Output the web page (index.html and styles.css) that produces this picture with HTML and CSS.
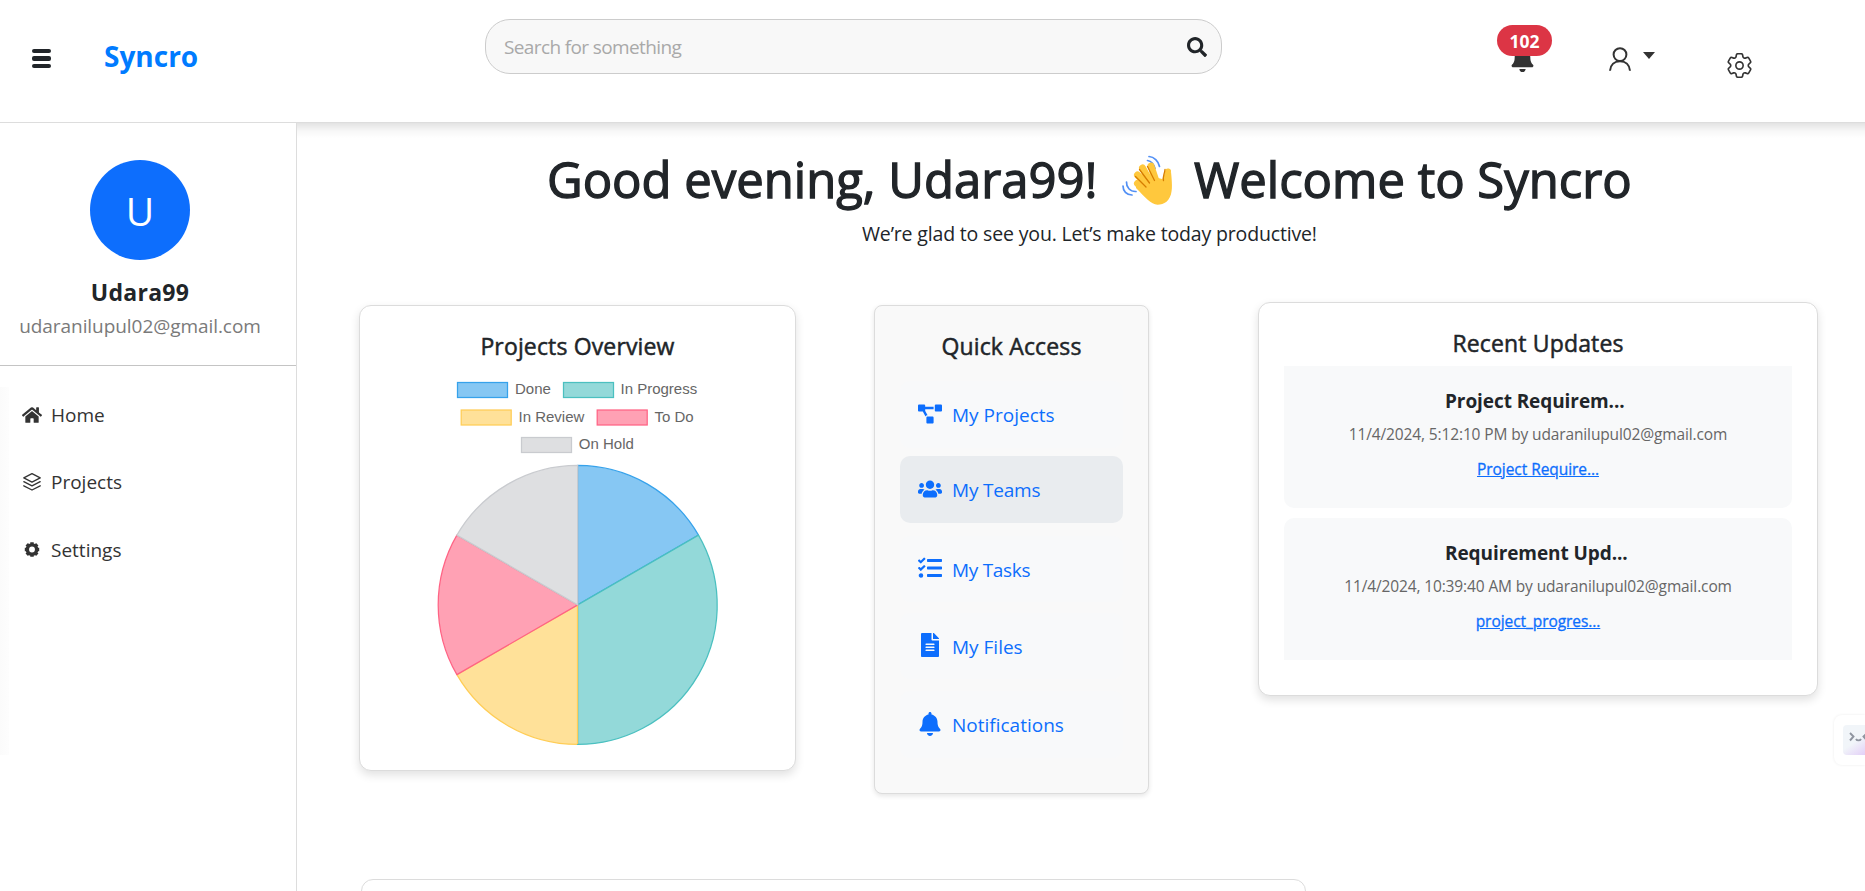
FILE: index.html
```html
<!DOCTYPE html>
<html lang="en">
<head>
<meta charset="utf-8">
<title>Syncro</title>
<link rel="stylesheet" href="styles.css">
</head>
<body>
<header class="topbar">
  <button class="burger" aria-label="Menu"><span></span><span></span><span></span></button>
  <a class="brand"><span class="t">Syncro</span></a>
  <div class="search">
    <span class="t placeholder">Search for something</span>
    <svg class="search-icon" viewBox="0 0 512 512"><path fill="#212529" d="M505 442.700 405.300 343c-4.500-4.500-10.600-7-17-7H372c27.600-35.300 44-79.700 44-128C416 93.100 322.900 0 208 0S0 93.100 0 208s93.100 208 208 208c48.300 0 92.700-16.400 128-44v16.300c0 6.400 2.500 12.500 7 17l99.700 99.700c9.400 9.400 24.600 9.400 33.900 0l28.300-28.300c9.400-9.400 9.400-24.600.1-34zM208 336c-70.700 0-128-57.200-128-128 0-70.700 57.200-128 128-128 70.700 0 128 57.200 128 128 0 70.700-57.200 128-128 128z"/></svg>
  </div>
  <div class="bell">
    <svg viewBox="0 0 448 512"><path fill="#333" d="M224 512c35.320 0 63.970-28.650 63.970-64H160.030c0 35.350 28.650 64 63.970 64zm215.390-149.710c-19.320-20.760-55.470-51.990-55.470-154.290 0-77.700-54.480-139.900-127.940-155.160V32c0-17.670-14.320-32-31.980-32s-31.980 14.330-31.980 32v20.840C118.560 68.100 64.080 130.300 64.080 208c0 102.300-36.150 133.530-55.470 154.290-6 6.450-8.660 14.160-8.610 21.710.11 16.400 12.980 32 32.100 32h383.800c19.120 0 32-15.600 32.100-32 .05-7.550-2.610-15.270-8.610-21.710z"/></svg>
    <span class="badge"><span class="t">102</span></span>
  </div>
  <div class="account">
    <svg class="person" viewBox="0 0 22 24" fill="none" stroke="#333" stroke-width="2"><circle cx="11" cy="7.600" r="6.400"/><path d="M1 23.800c.4-6 4.500-9.600 10-9.600s9.600 3.600 10 9.600"/></svg>
    <span class="caret"></span>
  </div>
  <svg class="gear" viewBox="2.400 2.400 19.200 19.200" fill="none" stroke="#333" stroke-width="1.250"><path d="M9.594 3.940c.09-.542.56-.94 1.110-.94h2.593c.55 0 1.020.398 1.110.94l.213 1.281c.063.374.313.686.645.870.074.040.147.083.220.127.325.196.720.257 1.075.124l1.217-.456a1.125 1.125 0 0 1 1.370.490l1.296 2.247a1.125 1.125 0 0 1-.260 1.431l-1.003.827c-.293.241-.438.613-.430.992a7.723 7.723 0 0 1 0 .255c-.008.378.137.750.430.991l1.004.827c.424.350.534.955.260 1.430l-1.298 2.247a1.125 1.125 0 0 1-1.369.491l-1.217-.456c-.355-.133-.750-.072-1.076.124a6.470 6.470 0 0 1-.220.128c-.331.183-.581.495-.644.869l-.213 1.281c-.090.543-.560.940-1.110.940h-2.594c-.550 0-1.019-.398-1.110-.940l-.213-1.281c-.062-.374-.312-.686-.644-.870a6.520 6.520 0 0 1-.220-.127c-.325-.196-.720-.257-1.076-.124l-1.217.456a1.125 1.125 0 0 1-1.369-.490l-1.297-2.247a1.125 1.125 0 0 1 .260-1.431l1.004-.827c.292-.240.437-.613.430-.991a6.932 6.932 0 0 1 0-.255c.007-.380-.138-.751-.430-.992l-1.004-.827a1.125 1.125 0 0 1-.260-1.430l1.297-2.247a1.125 1.125 0 0 1 1.370-.491l1.216.456c.356.133.751.072 1.076-.124.072-.044.146-.086.220-.128.332-.183.582-.495.644-.869l.214-1.280Z"/><circle cx="12" cy="12" r="2.800"/></svg>
</header>
<div class="layout">
  <aside class="sidebar">
    <div class="profile">
      <div class="avatar"><span class="t">U</span></div>
      <div class="name"><span class="t">Udara99</span></div>
      <div class="email"><span class="t">udaranilupul02@gmail.com</span></div>
    </div>
    <nav class="menu">
      <a><svg class="i-home" viewBox="0 0 576 512"><path fill="#333" d="M280.370 148.260 96 300.110V464a16 16 0 0 0 16 16l112.060-.290a16 16 0 0 0 15.920-16V368a16 16 0 0 1 16-16h64a16 16 0 0 1 16 16v95.640a16 16 0 0 0 16 16.050L464 480a16 16 0 0 0 16-16V300L295.670 148.260a12.190 12.190 0 0 0-15.300 0zM571.600 251.470 488 182.560V44.050a12 12 0 0 0-12-12h-56a12 12 0 0 0-12 12v72.610L318.470 43a48 48 0 0 0-61 0L4.340 251.470a12 12 0 0 0-1.600 16.900l25.500 31A12 12 0 0 0 45.150 301l235.220-193.740a12.190 12.190 0 0 1 15.300 0L530.900 301a12 12 0 0 0 16.900-1.600l25.500-31a12 12 0 0 0-1.700-16.930z"/></svg><span class="t">Home</span></a>
      <a><svg class="i-layers" viewBox="0 0 18 18" fill="none" stroke="#333" stroke-width="1.300" stroke-linejoin="round" stroke-linecap="round"><path d="M9 .7 17.200 4.900 9 9.100.8 4.900z"/><path d="M.8 8.700 9 12.900l8.200-4.200"/><path d="M.8 12.800 9 17l8.200-4.200"/></svg><span class="t">Projects</span></a>
      <a><svg class="i-cog" viewBox="-10 -10 20 20"><circle r="6.200" fill="none" stroke="#333" stroke-width="4.600"/><g stroke="#333" stroke-width="4.600"><path d="M0-9.600V-6M0 6v3.600M-9.600 0H-6M6 0h3.600"/><path d="M-7-7l2.500 2.500M4.500 4.500 7 7M-7 7l2.500-2.500M4.500-4.500 7-7"/></g></svg><span class="t">Settings</span></a>
    </nav>
    <div class="edge"></div>
  </aside>
  <main class="main">
    <h1 class="greet">
      <span class="t g1">Good evening, Udara99!</span>
      <svg class="wave" viewBox="0 0 50 50"><g fill="none" stroke="#5290f5" stroke-width="1.700" stroke-linecap="round"><path d="M27 1.500c5 .3 9.500 4.500 10.500 10"/><path d="M25.500 5.500c3.500.6 6.500 4 7.500 8"/><path d="M4.500 27c-.3 5 3.500 9.800 9.500 9.500"/><path d="M1 31c0 5 3.500 9 9 9"/></g><g stroke="#ffc83d" stroke-linecap="round" fill="none"><path stroke-width="7" d="M15.500 28.500 27 38M15.500 20 29 34M20.500 13 31 32M29 11l6 18"/><path stroke-width="6" d="M46 16.500 43 29"/></g><path fill="#ffc83d" d="M14 30c7-3 14-8 18-8l8 2 9-7c.8 7 1.300 14 .6 19C48.400 46 42 49.800 35.500 49.800 29 49.500 23 42 14 33z"/><path fill="none" stroke="#d67d00" stroke-width="1.300" stroke-linecap="round" d="M13.500 21.500 24 32M17.500 14.500 27.500 28M25.500 11.500l7 14M43 14.500c-.6 5-2.500 7-1.500 11"/></svg>
      <span class="t g2">Welcome to Syncro</span>
    </h1>
    <p class="lead"><span class="t">We’re glad to see you. Let’s make today productive!</span></p>
    <div class="cards">
      <section class="card overview">
        <h2><span class="t">Projects Overview</span></h2>
        <svg class="chart" width="435" height="400" viewBox="360 371 435 400">
          <g stroke-width="1.250">
            <rect x="457.500" y="382.500" width="50" height="15" fill="#86c7f3" stroke="#36a2eb"/>
            <rect x="563.500" y="382.500" width="50" height="15" fill="#93d9d9" stroke="#4bc0c0"/>
            <rect x="461.200" y="410" width="50" height="15" fill="#ffe199" stroke="#ffcd56"/>
            <rect x="597.200" y="410" width="50" height="15" fill="#ffa1b4" stroke="#ff6384"/>
            <rect x="521.500" y="437.500" width="50" height="15" fill="#dedfe1" stroke="#c9cbcf"/>
          </g>
          <g class="legend">
            <text x="515" y="394">Done</text><text x="620.500" y="394">In Progress</text>
            <text x="518.500" y="422">In Review</text><text x="654.500" y="422">To Do</text>
            <text x="578.800" y="449">On Hold</text>
          </g>
          <g stroke-width="1.250" stroke-linejoin="round">
            <path fill="#86c7f3" stroke="#36a2eb" d="M577.700 604.900V465.400A139.500 139.500 0 0 1 698.510 535.150z"/>
            <path fill="#ffe199" stroke="#ffcd56" d="M577.700 604.900V744.400A139.500 139.500 0 0 1 456.890 674.650z"/>
            <path fill="#93d9d9" stroke="#4bc0c0" d="M577.700 604.900 698.510 535.150A139.500 139.500 0 0 1 577.700 744.400z"/>
            <path fill="none" stroke="#ffcd56" d="M577.500 605V744"/>
            <path fill="#ffa1b4" stroke="#ff6384" d="M577.700 604.900 456.890 674.650A139.500 139.500 0 0 1 456.890 535.150z"/>
            <path fill="#dedfe1" stroke="#c9cbcf" d="M577.700 604.900 456.890 535.150A139.500 139.500 0 0 1 577.700 465.400z"/>
          </g>
        </svg>
      </section>
      <section class="card quick">
        <h2><span class="t">Quick Access</span></h2>
        <a class="q q1"><svg viewBox="0 0 640 512"><path d="M384 320H256c-17.670 0-32 14.330-32 32v128c0 17.670 14.330 32 32 32h128c17.670 0 32-14.330 32-32V352c0-17.670-14.330-32-32-32zM192 32c0-17.670-14.330-32-32-32H32C14.330 0 0 14.330 0 32v128c0 17.670 14.330 32 32 32h95.720l73.160 128.040C211.980 300.980 232.400 288 256 288h.280L192 175.510V128h224V64H192V32zM608 0H480c-17.670 0-32 14.330-32 32v128c0 17.670 14.330 32 32 32h128c17.670 0 32-14.330 32-32V32c0-17.670-14.330-32-32-32z"/></svg><span class="t">My Projects</span></a>
        <a class="q q2"><svg viewBox="0 0 640 512"><path d="M96 224c35.300 0 64-28.700 64-64s-28.700-64-64-64-64 28.700-64 64 28.700 64 64 64zm448 0c35.300 0 64-28.700 64-64s-28.700-64-64-64-64 28.700-64 64 28.700 64 64 64zm32 32h-64c-17.600 0-33.500 7.100-45.100 18.600 40.300 22.100 68.900 62 75.100 109.400h66c17.700 0 32-14.300 32-32v-32c0-35.300-28.700-64-64-64zm-256 0c61.900 0 112-50.100 112-112S381.900 32 320 32 208 82.100 208 144s50.100 112 112 112zm76.800 32h-8.300c-20.800 10-43.900 16-68.500 16s-47.600-6-68.500-16h-8.300C179.600 288 128 339.600 128 403.200V432c0 26.500 21.500 48 48 48h288c26.500 0 48-21.500 48-48v-28.800c0-63.600-51.600-115.200-115.200-115.200zm-223.700-13.400C161.500 263.100 145.600 256 128 256H64c-35.300 0-64 28.700-64 64v32c0 17.700 14.300 32 32 32h65.900c6.300-47.400 34.900-87.300 75.200-109.400z"/></svg><span class="t">My Teams</span></a>
        <a class="q q3"><svg viewBox="0 0 512 512"><path d="M139.610 35.500a12 12 0 0 0-17 0L58.930 98.810l-22.700-22.120a12 12 0 0 0-17 0L3.530 92.410a12 12 0 0 0 0 17l47.590 47.400a12.780 12.780 0 0 0 17.610 0l15.590-15.620L156.520 69a12.090 12.090 0 0 0 .090-17zm0 159.190a12 12 0 0 0-17 0l-63.680 63.720-22.700-22.100a12 12 0 0 0-17 0L3.530 252a12 12 0 0 0 0 17L51 316.500a12.770 12.770 0 0 0 17.600 0l15.700-15.690 72.200-72.220a12 12 0 0 0 .090-16.900zM64 368c-26.490 0-48.590 21.500-48.590 48S37.530 464 64 464a48 48 0 0 0 0-96zm432 16H208a16 16 0 0 0-16 16v32a16 16 0 0 0 16 16h288a16 16 0 0 0 16-16v-32a16 16 0 0 0-16-16zm0-320H208a16 16 0 0 0-16 16v32a16 16 0 0 0 16 16h288a16 16 0 0 0 16-16V80a16 16 0 0 0-16-16zm0 160H208a16 16 0 0 0-16 16v32a16 16 0 0 0 16 16h288a16 16 0 0 0 16-16v-32a16 16 0 0 0-16-16z"/></svg><span class="t">My Tasks</span></a>
        <a class="q q4"><svg viewBox="0 0 384 512"><path d="M224 136V0H24C10.700 0 0 10.700 0 24v464c0 13.300 10.700 24 24 24h336c13.300 0 24-10.700 24-24V160H248c-13.200 0-24-10.800-24-24zm64 236c0 6.600-5.400 12-12 12H108c-6.600 0-12-5.400-12-12v-8c0-6.600 5.400-12 12-12h168c6.600 0 12 5.400 12 12v8zm0-64c0 6.600-5.400 12-12 12H108c-6.600 0-12-5.400-12-12v-8c0-6.600 5.400-12 12-12h168c6.600 0 12 5.400 12 12v8zm0-72v8c0 6.600-5.400 12-12 12H108c-6.600 0-12-5.400-12-12v-8c0-6.600 5.400-12 12-12h168c6.600 0 12 5.400 12 12zm96-114.100v6.100H256V0h6.100c6.400 0 12.500 2.500 17 7l97.900 98c4.500 4.500 7 10.600 7 16.900z"/></svg><span class="t">My Files</span></a>
        <a class="q q5"><svg viewBox="0 0 448 512"><path d="M224 512c35.320 0 63.970-28.650 63.970-64H160.030c0 35.350 28.650 64 63.970 64zm215.390-149.710c-19.320-20.760-55.470-51.990-55.470-154.290 0-77.700-54.480-139.900-127.940-155.160V32c0-17.670-14.320-32-31.980-32s-31.980 14.330-31.980 32v20.840C118.560 68.100 64.080 130.300 64.080 208c0 102.300-36.150 133.530-55.470 154.290-6 6.450-8.660 14.160-8.610 21.710.11 16.400 12.980 32 32.100 32h383.800c19.120 0 32-15.600 32.100-32 .05-7.550-2.610-15.270-8.610-21.710z"/></svg><span class="t">Notifications</span></a>
      </section>
      <section class="card updates">
        <h2><span class="t">Recent Updates</span></h2>
        <div class="feed">
          <article class="update">
            <h3><span class="t u1">Project Requirem...</span></h3>
            <p><span class="t u2">11/4/2024, 5:12:10 PM by udaranilupul02@gmail.com</span></p>
            <a><span class="t u3">Project Require...</span></a>
          </article>
          <article class="update">
            <h3><span class="t u1">Requirement Upd...</span></h3>
            <p><span class="t u2">11/4/2024, 10:39:40 AM by udaranilupul02@gmail.com</span></p>
            <a><span class="t u3">project_progres...</span></a>
          </article>
        </div>
      </section>
    </div>
    <section class="card next"></section>
  </main>
</div>
<div class="widget"><div class="face"><svg width="30" height="30" viewBox="0 0 30 30" fill="none" stroke="#8f95a0" stroke-width="1.900"><path d="M7 8l3.500 3.500L7 15.500M13 14c1 1.800 4 1.800 5 0M24 8l-3.500 3.500L24 15.500"/></svg></div></div>
</body>
</html>
```
FILE: styles.css
```css
* { box-sizing: border-box; }
body {
  margin: 0;
  height: 891px;
  overflow: hidden;
  background: #fff;
  color: #212529;
  font-family: "Open Sans", "Noto Sans", sans-serif;
  font-size: 19px;
}
h1, h2, h3, p { margin: 0; }
.t { white-space: nowrap; }

.topbar {
  position: relative;
  z-index: 1;
  display: flex;
  align-items: flex-start;
  height: 123px;
  border-bottom: 1px solid #ddd;
  background: #fff;
}
.burger {
  display: flex;
  flex-direction: column;
  gap: 3.3px;
  width: 19px;
  margin: 49px 0 0 32px;
  padding: 0;
  border: 0;
  background: none;
}
.burger span { height: 4.200px; border-radius: 2px; background: #212529; }
.brand {
  width: 94px;
  margin: 36px 0 0 53px;
  color: #007bff;
  font-size: 28px;
  font-weight: 700;
  line-height: 40px;
  letter-spacing: 0;
}
.search {
  display: flex;
  align-items: center;
  justify-content: space-between;
  width: 737px;
  height: 55px;
  margin: 19px 0 0 287px;
  padding: 0 14px 0 18px;
  border: 1px solid #ccc;
  border-radius: 25px;
  background: #f8f8f8;
}
.placeholder { color: #a9a9a9; font-size: 19px; letter-spacing: -0.62px; }
.search-icon { width: 20px; height: 20px; }
.bell { position: relative; width: 22px; height: 25px; margin: 47px 0 0 289px; }
.bell svg { display: block; width: 23px; height: 25px; }
.badge {
  position: absolute;
  left: -14px;
  top: -22px;
  width: 55px;
  height: 31px;
  border-radius: 16px;
  background: #dc3545;
  color: #fff;
  font-size: 17.5px;
  font-weight: 700;
  line-height: 32px;
  text-align: center;
}
.account { display: flex; gap: 12px; margin: 47px 0 0 76px; }
.person { width: 22px; height: 24px; }
.caret { margin-top: 5px; width: 0; height: 7px; border: 6.500px solid transparent; border-top: 7px solid #333; border-bottom: 0; }
.gear { width: 25px; height: 25px; margin: 53px 0 0 72px; }

.layout { display: flex; height: 768px; }
.sidebar {
  position: relative;
  z-index: 2;
  flex: none;
  width: 297px;
  border-right: 1px solid #ddd;
  background: #fff;
}
.profile {
  display: flex;
  flex-direction: column;
  align-items: center;
  height: 243px;
  padding: 37px 16px 0 0;
  border-bottom: 1px solid #c4c4c4;
}
.avatar {
  width: 100px;
  height: 100px;
  border-radius: 50%;
  background: #0d6efd;
  color: #fff;
  font-size: 39px;
  line-height: 101px;
  text-align: center;
}
.name { margin-top: 14px; font-size: 23px; font-weight: 700; line-height: 36px; letter-spacing: 0.3px; }
.email { margin-top: 0; color: #7a7a7a; font-size: 19px; line-height: 32px; letter-spacing: -0.06px; }
.menu { display: flex; flex-direction: column; padding-top: 15px; }
.menu a { display: flex; align-items: center; height: 67.600px; padding-left: 22px; color: #333; }
.menu svg { flex: none; margin-right: 9px; }
.i-home { width: 20px; height: 18px; }
.i-layers { width: 20px; height: 18px; }
.i-cog { width: 20px; height: 15px; }
.edge { position: absolute; left: 0; top: 264px; width: 9px; height: 368px; background: linear-gradient(90deg, #fbfbfb, #fdfdfd); }

.main { position: relative; flex: 1; padding-left: 62px; background: linear-gradient(rgba(0,0,0,.11), rgba(0,0,0,.03) 8px, rgba(0,0,0,0) 15px); }
.greet { display: flex; align-items: flex-start; padding: 22px 0 0 188px; font-size: 49px; font-weight: 400; line-height: 69px; height: 94px; -webkit-text-stroke: 1.300px #212529; }
.g1 { width: 575px; letter-spacing: 0; }
.wave { flex: none; width: 50px; height: 50px; margin: 10px 22px 0 0; -webkit-text-stroke: 0; }
.g2 { letter-spacing: 0; }
.lead { margin-left: 503px; font-size: 19.500px; line-height: 34px; letter-spacing: -0.16px; }
.cards { display: flex; align-items: flex-start; margin-top: 51px; }
.card { border: 1px solid #dcdcdc; background: #fff; }
.card h2 { font-size: 23px; font-weight: 400; line-height: 34px; height: 36px; text-align: center; letter-spacing: 0.15px; -webkit-text-stroke: 0.500px #212529; }
.overview { width: 437px; height: 466px; margin-top: 3px; border-radius: 12px; padding-top: 23px; box-shadow: 0 4px 10px rgba(0,0,0,.12); }
.chart { display: block; margin-top: 6px; }
.legend { font-family: "Liberation Sans", Arial, sans-serif; font-size: 15px; fill: #666; }
.quick { width: 275px; height: 489px; margin: 3px 0 0 78px; padding: 23px 25px 0; border-radius: 8px; background: #f9f9f9; box-shadow: 0 2px 5px rgba(0,0,0,.1); }
.q { display: flex; align-items: center; height: 66.500px; padding: 2px 0 0 18px; border-radius: 10px; background: #f8f9fa; color: #0d6efd; letter-spacing: -0.3px; }
.q svg { flex: none; width: 24px; height: 24px; margin: -3px 10px 0 0; fill: #0d6efd; }
.q1 { margin-top: 16px; letter-spacing: 0; }
.q2 { margin-top: 8.500px; background: #e9ecef; letter-spacing: -0.2px; }
.q3 { margin-top: 13px; }
.q4 { margin-top: 10.500px; letter-spacing: 0; }
.q5 { margin-top: 12px; letter-spacing: 0; }
.updates { width: 560px; height: 394px; margin-left: 109px; padding: 23px 25px 0; border-radius: 12px; box-shadow: 0 4px 10px rgba(0,0,0,.12); }
.feed { display: flex; flex-direction: column; gap: 10px; margin-top: 4px; }
.update { height: 142px; padding-top: 20px; border-radius: 10px; background: #f8f9fa; text-align: center; }
.update:first-child { border-radius: 0 0 10px 10px; }
.update:last-child { border-radius: 10px 10px 0 0; }
.update h3 { width: 186px; margin: 0 auto; font-size: 19px; font-weight: 700; line-height: 30px; text-align: left; }
.update p { margin-top: 5px; color: #666; font-size: 15.500px; line-height: 26px; }
.update a { display: block; margin-top: 9px; color: #0d6efd; font-size: 15.500px; line-height: 26px; text-decoration: underline; -webkit-text-stroke: 0.300px #0d6efd; }
.u1 { letter-spacing: -0.08px; }
.u2 { letter-spacing: -0.13px; }
.u3 { letter-spacing: -0.06px; }
.next { width: 945px; height: 100px; margin: 85px 0 0 2px; border-radius: 12px; }

.widget {
  position: absolute;
  z-index: 3;
  left: 1834px;
  top: 715px;
  width: 31px;
  height: 50px;
  padding: 10px 0 0 9px;
  border-radius: 8px 0 0 8px;
  background: #fff;
  box-shadow: 0 0 3px rgba(0,0,0,.08);
}
.face { width: 22px; height: 30px; overflow: hidden; border-radius: 4px 0 0 4px; background: linear-gradient(145deg, #f1f5f9 55%, #e3cff7); }
```
